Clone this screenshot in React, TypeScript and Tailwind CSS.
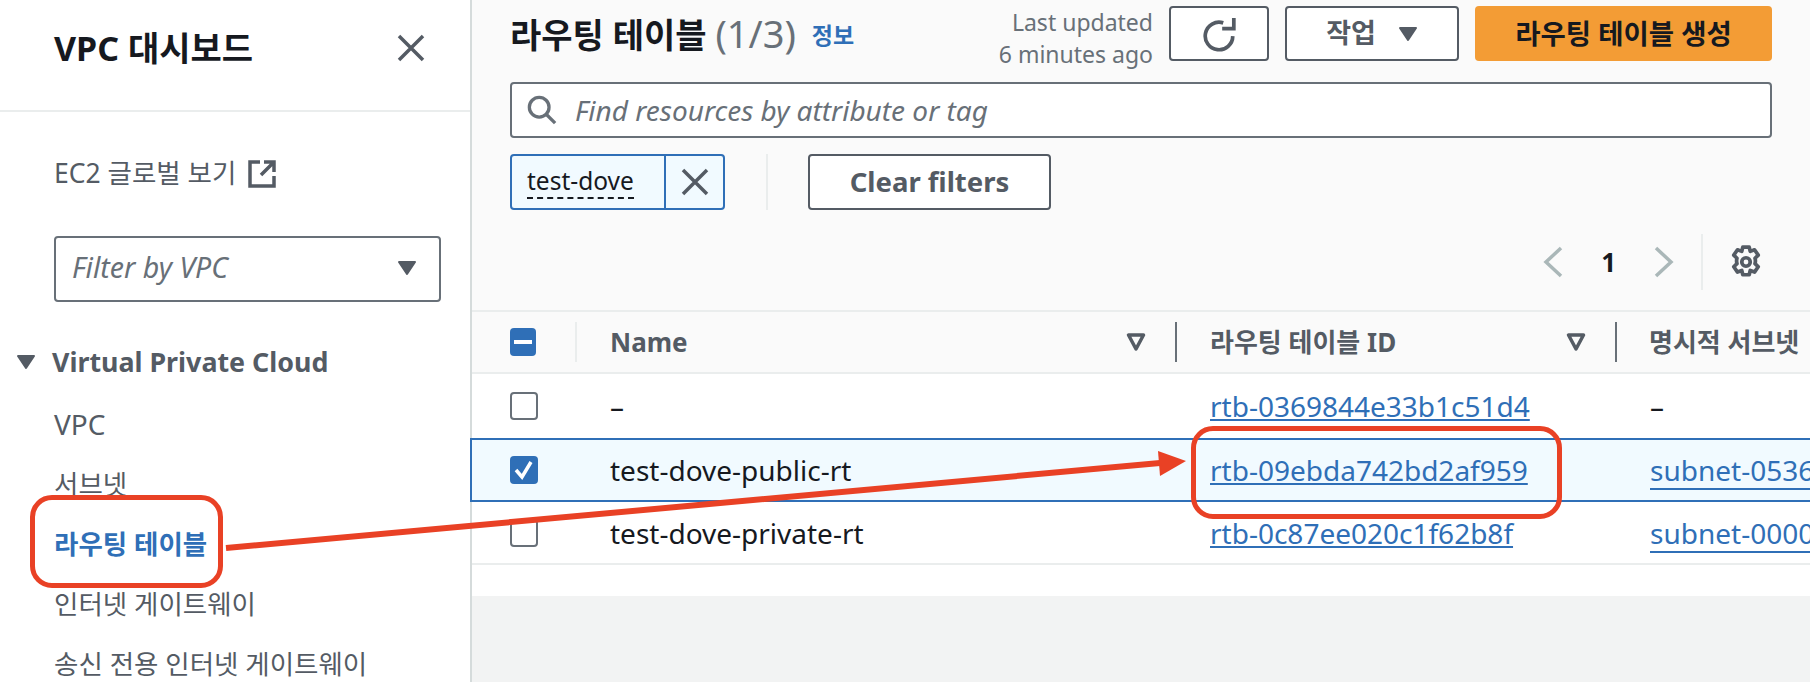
const font = { fontFamily: '"Noto Sans", "Noto Sans CJK KR", sans-serif' };

const Caret = ({ className }: { className: string }) => (
  <svg viewBox="0 0 20 16" className={className} fill="#545b64" stroke="#545b64" strokeWidth="2" strokeLinejoin="round">
    <path d="M2 2h16l-8 12z" />
  </svg>
);

const FilterIcon = () => (
  <svg viewBox="0 0 20 20" className="h-5 w-5" fill="none" stroke="#545b64" strokeWidth="3.5" strokeLinejoin="round">
    <path d="M2.5 3h15L10 17z" />
  </svg>
);

const Check = ({ mode }: { mode: 'none' | 'check' | 'minus' }) => {
  if (mode === 'none') {
    return <div className="h-[28px] w-[28px] rounded-[4px] border-2 border-[#687078] bg-white" />;
  }
  return (
    <div className="flex h-[28px] w-[28px] items-center justify-center rounded-[4px] bg-[#2f6fb7]">
      {mode === 'minus' ? (
        <div className="h-[4px] w-[18px] bg-white" />
      ) : (
        <svg viewBox="0 0 28 28" className="h-[28px] w-[28px]" fill="none" stroke="white" strokeWidth="3.5">
          <path d="M6 14l6 7 9-15" />
        </svg>
      )}
    </div>
  );
};

const Sidebar = () => (
  <div className="h-full w-[472px] shrink-0 border-r-2 border-[#d5dbdb] bg-white">
    <div className="flex h-[112px] items-start justify-between border-b-2 border-[#eaeded] pl-[54px] pr-[45px]">
      <h1 className="mt-[26px] whitespace-nowrap text-[34px] font-bold leading-[44px] text-[#16191f]">VPC 대시보드</h1>
      <svg viewBox="0 0 28 28" className="mt-[34px] h-[28px] w-[28px]" fill="none" stroke="#545b64" strokeWidth="3.5">
        <path d="M2 2l24 24M26 2L2 26" />
      </svg>
    </div>
    <div className="mt-[44px] flex h-[36px] items-center pl-[54px] text-[26.5px] text-[#545b64]">
      EC2 글로벌 보기
      <svg viewBox="0 0 28 28" className="ml-[12px] h-[28px] w-[28px]" fill="none" stroke="#545b64" strokeWidth="3.5">
        <path d="M12 2H2v24h24V16" />
        <path d="M13 15L26 2M16 2h10v10" />
      </svg>
    </div>
    <div className="ml-[54px] mt-[44px] flex h-[66px] w-[387px] items-center justify-between rounded-[4px] border-2 border-[#687078] pb-[3px] pl-[16px] pr-[22px] text-[28.5px] italic text-[#687078]">
      Filter by VPC
      <Caret className="h-[16px] w-[20px]" />
    </div>
    <div className="mt-[42px] flex h-[36px] items-center pl-[16px] text-[26.8px] font-bold text-[#545b64]">
      <Caret className="mr-[16px] h-[16px] w-[20px]" />
      Virtual Private Cloud
    </div>
    <div className="mt-[14px] flex flex-col pl-[54px] text-[26.5px] leading-[60px] text-[#545b64]">
      <div className="text-[28px]">VPC</div>
      <div>서브넷</div>
      <div className="font-bold text-[#2f6fb7]">라우팅 테이블</div>
      <div>인터넷 게이트웨이</div>
      <div className="whitespace-nowrap">송신 전용 인터넷 게이트웨이</div>
    </div>
  </div>
);

const Toolbar = () => (
  <div className="h-[310px] px-[38px]">
    <div className="flex h-[67px] items-start">
      <h2 className="mt-[10px] whitespace-nowrap text-[34px] font-bold leading-[46px] text-[#16191f]">
        라우팅 테이블 <span className="text-[38px] font-normal text-[#687078]">(1/3)</span>
      </h2>
      <span className="ml-[16px] mt-[21px] text-[23px] font-bold leading-[28px] text-[#2f6fb7]">정보</span>
      <div className="ml-auto mr-[16px] whitespace-nowrap pt-[6px] text-right text-[23px] leading-[32px] text-[#687078]">
        <div>Last updated</div>
        <div>6 minutes ago</div>
      </div>
      <button className="mt-[6px] flex h-[55px] w-[100px] items-center justify-center rounded-[4px] border-2 border-[#545b64] bg-white">
        <svg viewBox="0 0 34 34" className="h-[36px] w-[36px]" fill="none" stroke="#545b64" strokeWidth="3.5">
          <path d="M30 19A13 13 0 1 1 21 6.5" />
          <path d="M31 2v10H20" />
        </svg>
      </button>
      <button className="ml-[16px] mt-[6px] flex h-[55px] w-[174px] items-center justify-center gap-[22px] rounded-[4px] border-2 border-[#545b64] bg-white text-[27px] font-bold text-[#545b64]">
        작업
        <Caret className="h-[16px] w-[20px]" />
      </button>
      <button className="ml-[16px] mt-[6px] flex h-[55px] w-[297px] items-center justify-center whitespace-nowrap rounded-[4px] bg-[#f39c35] text-[27.5px] font-bold text-[#16191f]">
        라우팅 테이블 생성
      </button>
    </div>
    <div className="mt-[15px] flex h-[56px] items-center rounded-[4px] border-2 border-[#687078] bg-white pl-[15px] text-[28px] italic text-[#687078]">
      <svg viewBox="0 0 32 32" className="mr-[18px] h-[30px] w-[30px]" fill="none" stroke="#687078" strokeWidth="3.5">
        <circle cx="13" cy="13" r="10.5" />
        <path d="M20.5 20.5L30 30" />
      </svg>
      Find resources by attribute or tag
    </div>
    <div className="mt-[16px] flex h-[56px] items-stretch">
      <div className="flex w-[215px] rounded-[4px] border-2 border-[#2f6fb7] bg-[#f1faff]">
        <div className="flex w-[152px] items-center pl-[15px]">
          <span className="border-b-2 border-dashed border-[#16191f] text-[24.5px] leading-[32px] text-[#16191f]">test-dove</span>
        </div>
        <div className="flex flex-1 items-center justify-center border-l-2 border-[#2f6fb7]">
          <svg viewBox="0 0 28 28" className="h-[28px] w-[28px]" fill="none" stroke="#545b64" strokeWidth="3.5">
            <path d="M2 2l24 24M26 2L2 26" />
          </svg>
        </div>
      </div>
      <div className="ml-[41px] w-[2px] bg-[#eaeded]" />
      <button className="ml-[40px] w-[243px] whitespace-nowrap rounded-[4px] border-2 border-[#545b64] bg-white text-[27.5px] font-bold text-[#545b64]">
        Clear filters
      </button>
    </div>
    <div className="mt-[24px] flex h-[56px] items-center justify-end">
      <svg viewBox="0 0 20 32" className="h-[32px] w-[20px]" fill="none" stroke="#aab7b8" strokeWidth="3.5">
        <path d="M18 2L3 16l15 14" />
      </svg>
      <span className="mx-[38px] text-[26px] font-bold text-[#16191f]">1</span>
      <svg viewBox="0 0 20 32" className="h-[32px] w-[20px]" fill="none" stroke="#aab7b8" strokeWidth="3.5">
        <path d="M2 2l15 14L2 30" />
      </svg>
      <div className="ml-[27px] h-[56px] w-[2px] bg-[#eaeded]" />
      <svg viewBox="0 0 32 32" className="ml-[26px] mr-[9px] h-[34px] w-[34px]" fill="none" stroke="#545b64" strokeWidth="3.5" strokeLinejoin="round">
        <path d="M13 2h6l1 4 4-1.5 3.5 5-3 3a9 9 0 0 1 0 5l3 3-3.5 5-4-1.5-1 4h-6l-1-4-4 1.5-3.5-5 3-3a9 9 0 0 1 0-5l-3-3 3.5-5 4 1.5z" />
        <circle cx="16" cy="16" r="4" />
      </svg>
    </div>
  </div>
);

const rows = [
  { name: '–', id: 'rtb-0369844e33b1c51d4', subnet: '', box: 'flex h-[64px] items-center' },
  { name: 'test-dove-public-rt', id: 'rtb-09ebda742bd2af959', subnet: 'subnet-0536', box: 'flex h-[64px] w-[1400px] -ml-[2px] items-center border-2 border-[#2f6fb7] bg-[#f1faff]' },
  { name: 'test-dove-private-rt', id: 'rtb-0c87ee020c1f62b8f', subnet: 'subnet-0000', box: 'flex h-[63px] items-center border-b-2 border-[#eaeded]' },
];

const Table = () => (
  <div className="bg-white">
    <div className="flex h-[64px] items-center border-y-2 border-[#eaeded] bg-[#fafafa] text-[26px] font-bold text-[#545b64]">
      <div className="flex w-[105px] shrink-0 items-center pl-[38px]">
        <Check mode="minus" />
        <div className="ml-[39px] h-[40px] w-[2px] bg-[#eaeded]" />
      </div>
      <div className="flex w-[600px] shrink-0 items-center pl-[33px]">
        <span>Name</span>
        <div className="ml-auto mr-[29px]"><FilterIcon /></div>
        <div className="h-[40px] w-[2px] bg-[#687078]" />
      </div>
      <div className="flex w-[440px] shrink-0 items-center pl-[33px]">
        <span>라우팅 테이블 ID</span>
        <div className="ml-auto mr-[29px]"><FilterIcon /></div>
        <div className="h-[40px] w-[2px] bg-[#687078]" />
      </div>
      <div className="whitespace-nowrap pl-[32px]">명시적 서브넷</div>
    </div>
    {rows.map((row) => (
      <div key={row.id} className={row.box + ' text-[28px] text-[#16191f]'}>
        <div className="w-[105px] shrink-0 pl-[38px]">
          <Check mode={row.subnet === 'subnet-0536' ? 'check' : 'none'} />
        </div>
        <div className="w-[600px] shrink-0 pl-[33px]">{row.name}</div>
        <div className="w-[440px] shrink-0 pl-[33px]">
          <span className="text-[#2f6fb7] underline decoration-2 underline-offset-[2px]">{row.id}</span>
        </div>
        <div className="whitespace-nowrap pl-[33px]">
          {row.subnet === '' ? '–' : <span className="text-[#2f6fb7] underline decoration-2 underline-offset-[7px]">{row.subnet}</span>}
        </div>
      </div>
    ))}
    <div className="h-[31px]" />
  </div>
);

const Annotations = () => (
  <>
    <div className="absolute left-[30px] top-[495px] h-[93px] w-[193px] rounded-[22px] border-[5px] border-[#e94125]" />
    <div className="absolute left-[1191px] top-[426px] h-[93px] w-[371px] rounded-[22px] border-[5px] border-[#e94125]" />
    <svg className="absolute left-0 top-0 h-[682px] w-[1810px]" viewBox="0 0 1810 682" fill="#e94125">
      <path d="M226 548L1160 463" stroke="#e94125" strokeWidth="6" />
      <path d="M1158 451L1186 461L1160 476z" />
    </svg>
  </>
);

export default function App() {
  return (
    <div className="relative flex h-[682px] w-[1810px] overflow-hidden bg-white" style={font}>
      <Sidebar />
      <div className="flex min-w-0 flex-1 flex-col bg-[#f2f3f3]">
        <div className="bg-[#fafafa]">
          <Toolbar />
        </div>
        <Table />
      </div>
      <Annotations />
    </div>
  );
}
